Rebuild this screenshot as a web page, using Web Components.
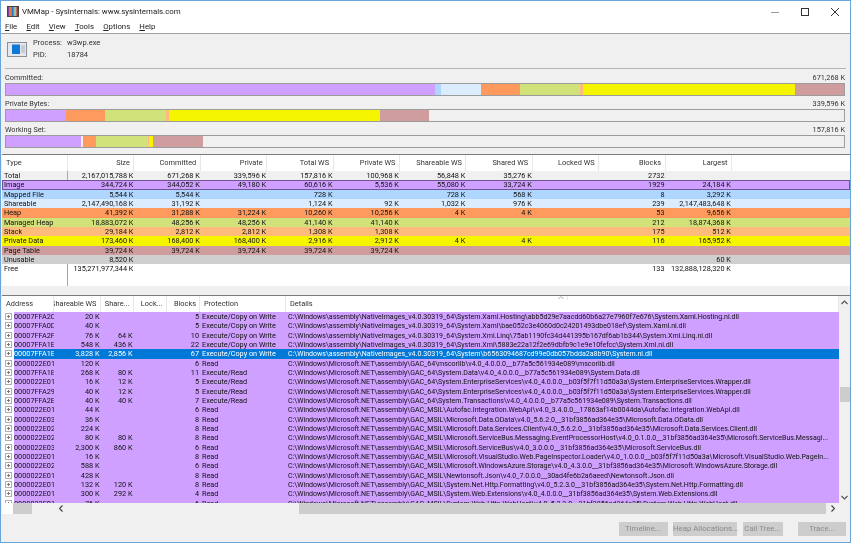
<!DOCTYPE html>
<html>
<head>
<meta charset="utf-8">
<title>VMMap</title>
<style>
  html, body { margin: 0; padding: 0; height: 100%; overflow: hidden; background: #f0f0f0; }
  body { font-family: Roboto, "Liberation Sans", sans-serif; color: #1c1c1c; }
</style>
</head>
<body>
<vm-window>
  <vm-titlebar slot="top" caption="VMMap - Sysinternals: www.sysinternals.com"></vm-titlebar>
  <vm-menubar slot="top" items="File,Edit,View,Tools,Options,Help"></vm-menubar>
  <vm-process slot="top" name="w3wp.exe" pid="18784"></vm-process>
  <vm-bars slot="top">
    <vm-bar label="Committed:" total="671,268 K"
      segments="image:428.7,mapped:6.3,share:40,heap:39,managed:60,stack:3,private:211.7,page:49.3"></vm-bar>
    <vm-bar label="Private Bytes:" total="339,596 K"
      segments="image:59.5,heap:39.5,managed:61,stack:2.5,private:211.5,page:48.7"></vm-bar>
    <vm-bar label="Working Set:" total="157,816 K"
      segments="image:75,none:1.500,heap:13.500,managed:51.500,stack:1,private:4,page:50"></vm-bar>
  </vm-bars>
  <vm-summary slot="top"></vm-summary>
  <vm-details slot="top"></vm-details>
  <vm-actions slot="bottom">
    <vm-button w="49">Timeline...</vm-button>
    <vm-button w="64">Heap Allocations...</vm-button>
    <vm-button w="40">Call Tree...</vm-button>
    <vm-button w="48">Trace...</vm-button>
  </vm-actions>
</vm-window>

<script>
const COLORS = {
  image: '#cfa0ff', mapped: '#aed6ff', share: '#dcecff', heap: '#ff9a5e', managed: '#d2e27a',
  stack: '#ffbb7b', private: '#f5f500', page: '#cf9d9d', unusable: '#cfcfcf', total: '#f0f0f0',
  none: 'transparent'
};

// small helper so every element gets an open shadow root
function shadow (el, html) {
  const root = el.attachShadow({mode: 'open'});
  root.innerHTML = html;
  return root;
}

class VmWindow extends HTMLElement {
  constructor () {
    super();
    shadow(this, `
      <style>
      :host { display: flex; flex-direction: column; box-sizing: border-box; width: 851px; height: 543px;
        border: 1px solid #6aa5d8; background: #f0f0f0; overflow: hidden; filter: blur(0.3px); }
      .top { flex: none; display: flex; flex-direction: column; }
      .bottom { flex: 1; }
      </style>
      <div class="top"><slot name="top"></slot></div>
      <div class="bottom"><slot name="bottom"></slot></div>`);
  }
}

class VmTitlebar extends HTMLElement {
  connectedCallback () {
    const stripes = ['#7a3fa8', '#e07b28', '#2f6fd0', '#3aa0d8', '#c9c22a', '#b03030'];
    shadow(this, `
      <style>
      :host { display: flex; align-items: center; height: 21px; background: #fff; padding-left: 6px; }
      svg { display: block; flex: none; }
      .cap { font-size: 7.85px; margin-left: 3px; color: #222; flex: 1; white-space: nowrap; }
      .btn { flex: none; width: 30px; display: flex; justify-content: center; }
      </style>
      <svg width="12" height="11" viewBox="0 0 12 11">
        <rect x="0.5" y="0.5" width="11" height="10" fill="#fff" stroke="#444"/>
        ${stripes.map((c, i) => `<rect x="${1 + i * 1.67}" y="1" width="1.67" height="9" fill="${c}"/>`).join('')}
      </svg>
      <span class="cap">${this.getAttribute('caption')}</span>
      <span class="btn"><svg width="10" height="10"><path d="M1 5.5h8" stroke="#999" stroke-width="1"/></svg></span>
      <span class="btn"><svg width="10" height="10"><rect x="1.5" y="1.5" width="7" height="7" fill="none" stroke="#333"/></svg></span>
      <span class="btn"><svg width="10" height="10"><path d="M1 1l8 8M9 1l-8 8" stroke="#333" stroke-width="1" fill="none"/></svg></span>`);
  }
}

class VmMenubar extends HTMLElement {
  connectedCallback () {
    const items = this.getAttribute('items').split(',');
    shadow(this, `
      <style>
      :host { display: flex; gap: 9.2px; height: 11px; background: #fff; padding-left: 4px; font-size: 7.8px;
        line-height: 10px; border-bottom: 1px solid #a0a0a0; color: #222; }
      u { text-underline-offset: 1px; text-decoration-thickness: 0.6px; }
      </style>
      ${items.map((t) => `<span><u>${t[0]}</u>${t.slice(1)}</span>`).join('')}`);
  }
}

class VmProcess extends HTMLElement {
  connectedCallback () {
    shadow(this, `
      <style>
      :host { display: grid; grid-template-columns: 26px 34px 1fr; grid-template-rows: 12px 12px; height: 35px;
        box-sizing: border-box; margin: 0 4px; padding: 3px 0 0 2px; border-bottom: 1px solid #b4b4b4; font-size: 7.5px;
        line-height: 12px; color: #333; align-content: start; }
      svg { grid-row: 1 / 3; margin-top: 5px; }
      </style>
      <svg width="20" height="15" viewBox="0 0 20 15">
        <rect x="0.5" y="0.5" width="19" height="14" fill="#e4e8ee" stroke="#8a8f96"/>
        <rect x="5" y="2.5" width="8" height="9.5" fill="#0f78d4"/>
        <path d="M14 4h4M14 6h4M14 8h4M14 10h4" stroke="#aab2bb"/>
      </svg>
      <span>Process:</span><span>${this.getAttribute('name')}</span>
      <span>PID:</span><span>${this.getAttribute('pid')}</span>`);
  }
}

class VmBars extends HTMLElement {
  constructor () {
    super();
    shadow(this, `
      <style>
      :host { display: flex; flex-direction: column; gap: 1px; padding: 2px 5px 0 4px; }
      </style>
      <slot></slot>`);
  }
}

class VmBar extends HTMLElement {
  connectedCallback () {
    const segs = this.getAttribute('segments').split(',').map((s) => s.split(':'));
    shadow(this, `
      <style>
      :host { display: block; height: 25px; font-size: 7.3px; color: #333; }
      .lab { display: flex; justify-content: space-between; height: 12px; line-height: 13px; }
      .track { display: flex; height: 13px; box-sizing: border-box; border: 1px solid #9c9c9c; background: #f0f0f0; }
      i { display: block; flex: none; }
      </style>
      <div class="lab"><span>${this.getAttribute('label')}</span><span>${this.getAttribute('total')}</span></div>
      <div class="track">${segs.map(([k, w]) => `<i style="width:${w}px;background:${COLORS[k]}"></i>`).join('')}</div>`);
  }
}

const SUMMARY_COLS = ['Size', 'Committed', 'Private', 'Total WS', 'Private WS', 'Shareable WS', 'Shared WS', 'Locked WS', 'Blocks', 'Largest'];
const SUMMARY = [
  ['total', 'Total', '2,167,015,788 K', '671,268 K', '339,596 K', '157,816 K', '100,968 K', '56,848 K', '35,276 K', '', '2732', ''],
  ['image', 'Image', '344,724 K', '344,052 K', '49,180 K', '60,616 K', '5,536 K', '55,080 K', '33,724 K', '', '1929', '24,184 K'],
  ['mapped', 'Mapped File', '5,544 K', '5,544 K', '', '728 K', '', '728 K', '568 K', '', '8', '3,292 K'],
  ['share', 'Shareable', '2,147,490,168 K', '31,192 K', '', '1,124 K', '92 K', '1,032 K', '976 K', '', '239', '2,147,483,648 K'],
  ['heap', 'Heap', '41,392 K', '31,288 K', '31,224 K', '10,260 K', '10,256 K', '4 K', '4 K', '', '53', '9,656 K'],
  ['managed', 'Managed Heap', '18,883,072 K', '48,256 K', '48,256 K', '41,140 K', '41,140 K', '', '', '', '212', '18,874,368 K'],
  ['stack', 'Stack', '29,184 K', '2,812 K', '2,812 K', '1,308 K', '1,308 K', '', '', '', '175', '512 K'],
  ['private', 'Private Data', '173,460 K', '168,400 K', '168,400 K', '2,916 K', '2,912 K', '4 K', '4 K', '', '116', '165,952 K'],
  ['page', 'Page Table', '39,724 K', '39,724 K', '39,724 K', '39,724 K', '39,724 K', '', '', '', '', ''],
  ['unusable', 'Unusable', '8,520 K', '', '', '', '', '', '', '', '', '60 K'],
  ['free', 'Free', '135,271,977,344 K', '', '', '', '', '', '', '', '133', '132,888,128,320 K']
];

class VmSummary extends HTMLElement {
  connectedCallback () {
    const cols = '66px repeat(10, 66.4px) 1fr';
    const head = `<div class="head"><span class="l">Type</span>${SUMMARY_COLS.map((c) => `<span>${c}</span>`).join('')}<span></span></div>`;
    const rows = SUMMARY.map(([k, ...cells]) => `
      <div class="row ${k}" style="background:${COLORS[k] || '#fff'}">
        ${cells.map((c, i) => `<span class="${i ? '' : 't'}">${c}</span>`).join('')}<span></span>
      </div>`).join('');
    shadow(this, `
      <style>
      :host { display: flex; flex-direction: column; margin: 6px 0 0 1px; height: 141px; box-sizing: border-box; border-top: 1px solid #7a7a7a; font-size: 7.3px; color: #111; }
      .body { flex: 1; display: flex; flex-direction: column; background: #fff; position: relative; }
      .head, .row { display: grid; grid-template-columns: ${cols}; white-space: nowrap; }
      .head { height: 16px; line-height: 16px; background: #fff; color: #333; font-size: 7.4px; }
      .head span { text-align: right; padding-right: 3.5px; border-right: 1px solid #e8e8e8; }
      .head span.l { text-align: left; padding-left: 4px; }
      .head span:last-child { border: 0; }
      .row { height: 9.333px; line-height: 9.4px; box-sizing: border-box; }
      .row span { text-align: right; padding-right: 1px; overflow: hidden; }
      .row span.t { text-align: left; padding-left: 2px; }
      .row.image { outline: 1px solid #6f5596; outline-offset: -1px; }
      .total span.t, .free span.t { border-right: 1.5px solid #a8a8a8; }
      .fill { flex: 1; width: 66px; box-sizing: border-box; border-right: 1.5px solid #a8a8a8; }
      .split { height: 9px; flex: none; background: #f0f0f0; }
      </style>
      <div class="body">${head}${rows}<div class="fill"></div></div>
      <div class="split"></div>`);
  }
}

const EXEC_COW = 'Execute/Copy on Write';
const EXEC = 'Execute/Read';
const NI = 'C:\\Windows\\assembly\\NativeImages_v4.0.30319_64\\';
const G64 = 'C:\\Windows\\Microsoft.NET\\assembly\\GAC_64\\';
const MSIL = 'C:\\Windows\\Microsoft.NET\\assembly\\GAC_MSIL\\';
const DETAILS = [
  ['00007FFA2C10', '20 K', '', '5', EXEC_COW, NI + 'System.Xaml.Hosting\\abb5d29e7aacdd60b6a27e7960f7e676\\System.Xaml.Hosting.ni.dll'],
  ['00007FFA0D10', '40 K', '', '5', EXEC_COW, NI + 'System.Xaml\\bae052c3e4060d0c24201493dbe018ef\\System.Xaml.ni.dll'],
  ['00007FFA2F10', '76 K', '64 K', '10', EXEC_COW, NI + 'System.Xml.Linq\\75ab1190fc34d441395b167df6ab1b344\\System.Xml.Linq.ni.dll'],
  ['00007FFA1E10', '548 K', '436 K', '22', EXEC_COW, NI + 'System.Xml\\5883e22a12f2e69dbfb9c1e9e10fefcc\\System.Xml.ni.dll'],
  ['00007FFA1E20', '3,828 K', '2,856 K', '67', EXEC_COW, NI + 'System\\b6563094687cd99e0db057bdda2a8b90\\System.ni.dll'],
  ['0000022E0110', '120 K', '', '6', 'Read', G64 + 'mscorlib\\v4.0_4.0.0.0__b77a5c561934e089\\mscorlib.dll'],
  ['00007FFA1E30', '268 K', '80 K', '11', EXEC, G64 + 'System.Data\\v4.0_4.0.0.0__b77a5c561934e089\\System.Data.dll'],
  ['0000022E0120', '16 K', '12 K', '5', EXEC, G64 + 'System.EnterpriseServices\\v4.0_4.0.0.0__b03f5f7f11d50a3a\\System.EnterpriseServices.Wrapper.dll'],
  ['00007FFA2910', '40 K', '12 K', '5', EXEC, G64 + 'System.EnterpriseServices\\v4.0_4.0.0.0__b03f5f7f11d50a3a\\System.EnterpriseServices.Wrapper.dll'],
  ['00007FFA2E10', '40 K', '40 K', '7', EXEC, G64 + 'System.Transactions\\v4.0_4.0.0.0__b77a5c561934e089\\System.Transactions.dll'],
  ['0000022E0130', '44 K', '', '6', 'Read', MSIL + 'Autofac.Integration.WebApi\\v4.0_3.4.0.0__17863af14b0044da\\Autofac.Integration.WebApi.dll'],
  ['0000022E0310', '36 K', '', '8', 'Read', MSIL + 'Microsoft.Data.OData\\v4.0_5.6.2.0__31bf3856ad364e35\\Microsoft.Data.OData.dll'],
  ['0000022E0210', '224 K', '', '8', 'Read', MSIL + 'Microsoft.Data.Services.Client\\v4.0_5.6.2.0__31bf3856ad364e35\\Microsoft.Data.Services.Client.dll'],
  ['0000022E0220', '80 K', '80 K', '8', 'Read', MSIL + 'Microsoft.ServiceBus.Messaging.EventProcessorHost\\v4.0_0.1.0.0__31bf3856ad364e35\\Microsoft.ServiceBus.Messagi...'],
  ['0000022E0320', '2,300 K', '860 K', '6', 'Read', MSIL + 'Microsoft.ServiceBus\\v4.0_3.0.0.0__31bf3856ad364e35\\Microsoft.ServiceBus.dll'],
  ['0000022E0140', '16 K', '', '8', 'Read', MSIL + 'Microsoft.VisualStudio.Web.PageInspector.Loader\\v4.0_1.0.0.0__b03f5f7f11d50a3a\\Microsoft.VisualStudio.Web.PageIn...'],
  ['0000022E0230', '588 K', '', '6', 'Read', MSIL + 'Microsoft.WindowsAzure.Storage\\v4.0_4.3.0.0__31bf3856ad364e35\\Microsoft.WindowsAzure.Storage.dll'],
  ['0000022E0150', '428 K', '', '8', 'Read', MSIL + 'Newtonsoft.Json\\v4.0_7.0.0.0__30ad4fe6b2a6aeed\\Newtonsoft.Json.dll'],
  ['0000022E0160', '132 K', '120 K', '8', 'Read', MSIL + 'System.Net.Http.Formatting\\v4.0_5.2.3.0__31bf3856ad364e35\\System.Net.Http.Formatting.dll'],
  ['0000022E0170', '300 K', '292 K', '4', 'Read', MSIL + 'System.Web.Extensions\\v4.0_4.0.0.0__31bf3856ad364e35\\System.Web.Extensions.dll'],
  ['0000022E0180', '76 K', '', '6', 'Read', MSIL + 'System.Web.Http.WebHost\\v4.0_5.2.3.0__31bf3856ad364e35\\System.Web.Http.WebHost.dll']
];
const PLUS = `<svg width="7" height="7" viewBox="0 0 7 7"><rect x="0.5" y="0.5" width="6" height="6" fill="#fff" stroke="#b0b0b0"/><path d="M2 3.5h3M3.5 2v3" stroke="#777"/></svg>`;

class VmDetails extends HTMLElement {
  connectedCallback () {
    const cols = '12px 40px 46.5px 33px 33px 33.5px 86px 1fr';
    const rows = DETAILS.map(([addr, ws, shared, blocks, prot, path], i) => `
      <div class="row ${i === 4 ? 'sel' : ''}">
        <span class="tree">${PLUS}</span>
        <span class="a">${addr}</span><span class="r">${ws}</span><span class="r">${shared}</span><span></span>
        <span class="r">${blocks}</span><span class="p">${prot}</span><span class="d">${path}</span>
      </div>`).join('');
    shadow(this, `
      <style>
      :host { display: grid; grid-template-columns: 1fr 11px; grid-template-rows: 207px 11px; margin-left: 1px;
        border-top: 1px solid #7a7a7a; font-size: 7.3px; color: #111; background: #fff; }
      .list { overflow: hidden; }
      .head, .row { display: grid; grid-template-columns: ${cols}; white-space: nowrap; }
      .head { height: 16px; line-height: 16px; color: #333; font-size: 7.4px; position: relative; }
      .head span { border-right: 1px solid #e8e8e8; overflow: hidden; text-align: right; padding-right: 3px; }
      .head .l { text-align: left; padding: 0 0 0 4px; }
      .head .clip { direction: rtl; text-align: left; padding-right: 3px; }
      .row { height: 9.333px; line-height: 9.4px; background: #cfa0ff; }
      .row.sel { color: #fff; }
      .row.sel span:not(.tree) { background: #0078d7; }
      .row span { overflow: hidden; }
      .tree { background: #fff; display: flex; align-items: center; padding-left: 3px; }
      .tree svg { display: block; flex: none; }
      .a { border-right: 0; }
      .r { text-align: right; padding-right: 1px; }
      .p { padding-left: 2px; }
      .d { padding-left: 2px; font-size: 7.05px; }
      .caret { position: absolute; left: 556px; top: 0; border: 0; padding: 0; line-height: 0; }
      .v { display: flex; flex-direction: column; align-items: center; justify-content: space-between; background: #f0f0f0; position: relative; }
      .v svg, .h svg { display: block; }
      .v .thumb { position: absolute; top: 91px; left: 1px; right: 0; height: 15px; background: #cdcdcd; }
      .v svg:first-child { margin-top: 4px; }
      .v svg:last-child { margin-bottom: 3px; }
      .h { grid-column: 1 / 3; display: flex; align-items: center; background: #f0f0f0; }
      .h .pad { width: 11px; height: 100%; background: #fff; flex: none; }
      .h .t1 { width: 19px; height: 100%; background: #cdcdcd; flex: none; }
      .h .sp { width: 27px; flex: none; }
      .h .sp2 { width: 236px; flex: none; }
      .h .t2 { width: 527px; height: 100%; background: #cdcdcd; flex: none; }
      .h .a2 { margin-left: 4.5px; }
      </style>
      <div class="list">
        <div class="head">
          <span class="l" style="grid-column: 1 / 3; padding-left: 4px;">Address</span><span class="clip">Shareable WS</span><span>Share...</span><span>Lock...</span><span>Blocks</span><span class="l">Protection</span><span class="l">Details</span>
          <span class="caret"><svg width="6" height="4"><path d="M.5 3l2.500-2.500L5.500 3" fill="none" stroke="#aaa"/></svg></span>
        </div>
        ${rows}
      </div>
      <div class="v">
        <svg width="7" height="5"><path d="M.5 4l3-3 3 3" fill="none" stroke="#555" stroke-width="1.2"/></svg>
        <div class="thumb"></div>
        <svg width="7" height="5"><path d="M.5 1l3 3 3-3" fill="none" stroke="#555" stroke-width="1.2"/></svg>
      </div>
      <div class="h">
        <span class="pad"></span><span class="t1"></span><span class="sp"></span>
        <svg width="4" height="7"><path d="M3.500 .5l-3 3 3 3" fill="none" stroke="#444" stroke-width="1.2"/></svg>
        <span class="sp2"></span><span class="t2"></span>
        <svg class="a2" width="4" height="7"><path d="M.5 .5l3 3-3 3" fill="none" stroke="#444" stroke-width="1.2"/></svg>
      </div>`);
  }
}

class VmActions extends HTMLElement {
  constructor () {
    super();
    shadow(this, `
      <style>
      :host { display: flex; justify-content: flex-end; gap: 5.5px; padding: 8px 4px 0 0; }
      ::slotted(:last-child) { margin-left: 10px; }
      </style>
      <slot></slot>`);
  }
}

class VmButton extends HTMLElement {
  connectedCallback () {
    shadow(this, `
      <style>
      :host { display: block; box-sizing: border-box; width: ${this.getAttribute('w')}px; height: 14px; background: #cdcdcd;
        text-align: center; font-size: 7.8px; line-height: 14px; color: #8a8a8a; white-space: nowrap; }
      </style>
      <slot></slot>`);
  }
}

customElements.define('vm-window', VmWindow);
customElements.define('vm-titlebar', VmTitlebar);
customElements.define('vm-menubar', VmMenubar);
customElements.define('vm-process', VmProcess);
customElements.define('vm-bars', VmBars);
customElements.define('vm-bar', VmBar);
customElements.define('vm-summary', VmSummary);
customElements.define('vm-details', VmDetails);
customElements.define('vm-actions', VmActions);
customElements.define('vm-button', VmButton);
</script>
</body>
</html>
